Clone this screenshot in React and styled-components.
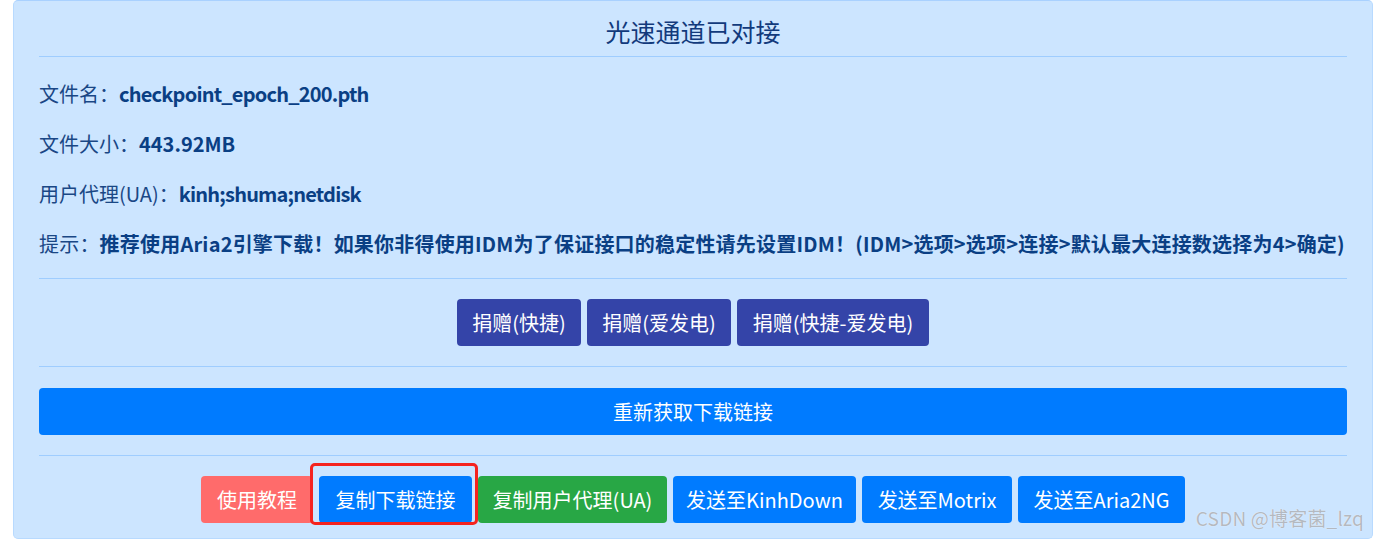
import React from "react";
import styled, { createGlobalStyle } from "styled-components";

const Global = createGlobalStyle`
  html, body { margin: 0; padding: 0; background: #ffffff; }
  body {
    font-family: "Noto Sans CJK SC", "Noto Sans", sans-serif;
    -webkit-font-smoothing: antialiased;
  }
  * { box-sizing: border-box; }
`;

const Page = styled.div`
  padding: 0 3px 0 13px;
  width: 1376px;
`;

const Card = styled.div`
  position: relative;
  width: 1360px;
  background: #cce5ff;
  border: 1px solid #b8daff;
  border-top: 1px solid #a9d1ff;
  border-radius: 5px;
  color: #004085;
  padding: 15px 25px 15px;
`;

const Title = styled.h5`
  margin: 0 0 10px;
  font-size: 25px;
  line-height: 30px;
  font-weight: 400;
  text-align: center;
  color: #123a7c;
`;

const Rule = styled.hr`
  margin: 0;
  border: 0;
  border-top: 1px solid #9fcdff;
  height: 0;
`;

const InfoBlock = styled.div`
  display: flex;
  flex-direction: column;
  gap: 20px;
  padding: 22px 0 19px;
`;

const InfoLine = styled.p`
  margin: 0;
  font-size: 20px;
  line-height: 30px;
  white-space: nowrap;
  color: #1a4785;
  letter-spacing: ${(p) => p.$spacing || 0}px;
`;

const Value = styled.b`
  font-weight: 700;
  color: #0a3f84;
  letter-spacing: ${(p) => (p.$tight ? "-0.8px" : "inherit")};
`;

const ButtonRow = styled.div`
  display: flex;
  justify-content: center;
  gap: 6px;
  padding: 20px 0;
`;

const Btn = styled.button`
  position: relative;
  display: inline-flex;
  align-items: center;
  justify-content: center;
  height: ${(p) => p.$h || 47}px;
  padding: 0 15px;
  border: 1px solid transparent;
  border-radius: 4px;
  background: ${(p) => p.$bg};
  color: #ffffff;
  font-family: "Noto Sans CJK SC", "Noto Sans", sans-serif;
  font-size: 20px;
  font-weight: 400;
  white-space: nowrap;
  cursor: pointer;
  width: ${(p) => (p.$w ? `${p.$w}px` : "auto")};
  ${(p) => (p.$block ? "width: 100%;" : "")}
`;

const FullRow = styled.div`
  padding: 21px 0 20px;
`;

const BottomRow = styled.div`
  display: flex;
  justify-content: center;
  gap: 6px;
  padding: 20px 0 0;
`;

const Highlight = styled.span`
  position: absolute;
  left: -10px;
  right: -7px;
  top: -14px;
  bottom: -3px;
  border: 3px solid #f5231f;
  border-radius: 5px;
  pointer-events: none;
`;

const Watermark = styled.span`
  position: absolute;
  right: 8px;
  bottom: 7px;
  font-family: "Noto Sans CJK SC", "Noto Sans", sans-serif;
  font-size: 19px;
  color: #b4b9c0;
  text-shadow: 0 0 1px #ffffff;
  letter-spacing: 0.2px;
`;

export default function App() {
  return (
    <>
      <Global />
      <Page>
        <Card>
          <Title>光速通道已对接</Title>
          <Rule />
          <InfoBlock>
            <InfoLine>
              文件名：<Value $tight>checkpoint_epoch_200.pth</Value>
            </InfoLine>
            <InfoLine>
              文件大小：<Value>443.92MB</Value>
            </InfoLine>
            <InfoLine>
              用户代理(UA)：<Value $tight>kinh;shuma;netdisk</Value>
            </InfoLine>
            <InfoLine $spacing={0.2}>
              提示：
              <Value>
                推荐使用Aria2引擎下载！如果你非得使用IDM为了保证接口的稳定性请先设置IDM！(IDM&gt;选项&gt;选项&gt;连接&gt;默认最大连接数选择为4&gt;确定)
              </Value>
            </InfoLine>
          </InfoBlock>
          <Rule />
          <ButtonRow>
            <Btn $bg="#3444a8" $w={124}>捐赠(快捷)</Btn>
            <Btn $bg="#3444a8" $w={144}>捐赠(爱发电)</Btn>
            <Btn $bg="#3444a8" $w={192}>捐赠(快捷-爱发电)</Btn>
          </ButtonRow>
          <Rule />
          <FullRow>
            <Btn $bg="#007bff" $h={47} $block>重新获取下载链接</Btn>
          </FullRow>
          <Rule />
          <BottomRow>
            <Btn $bg="#ff6b6b" $w={112}>使用教程</Btn>
            <Btn $bg="#007bff" $w={153}>
              复制下载链接
              <Highlight />
            </Btn>
            <Btn $bg="#28a745" $w={189}>复制用户代理(UA)</Btn>
            <Btn $bg="#007bff" $w={183}>发送至KinhDown</Btn>
            <Btn $bg="#007bff" $w={150}>发送至Motrix</Btn>
            <Btn $bg="#007bff" $w={167}>发送至Aria2NG</Btn>
          </BottomRow>
          <Watermark>CSDN @博客菌_lzq</Watermark>
        </Card>
      </Page>
    </>
  );
}
